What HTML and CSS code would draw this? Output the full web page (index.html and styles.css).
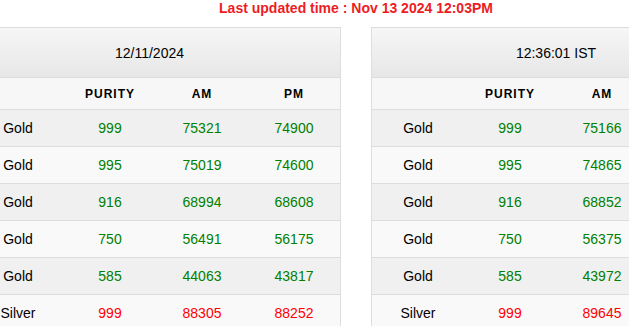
FILE: index.html
```html
<!DOCTYPE html>
<html lang="en">
<head>
<meta charset="utf-8">
<title>Rates</title>
<link rel="stylesheet" href="styles.css">
</head>
<body>
<div class="board">
  <div class="updated">Last updated time : Nov 13 2024 12:03PM</div>
  <div class="panels">
    <div class="panel">
      <div class="head head-date">12/11/2024</div>
      <div class="cols"><span></span><span>PURITY</span><span>AM</span><span>PM</span></div>
      <div class="row odd"><span class="metal">Gold</span><span class="up">999</span><span class="up">75321</span><span class="up">74900</span></div>
      <div class="row even"><span class="metal">Gold</span><span class="up">995</span><span class="up">75019</span><span class="up">74600</span></div>
      <div class="row odd"><span class="metal">Gold</span><span class="up">916</span><span class="up">68994</span><span class="up">68608</span></div>
      <div class="row even"><span class="metal">Gold</span><span class="up">750</span><span class="up">56491</span><span class="up">56175</span></div>
      <div class="row odd"><span class="metal">Gold</span><span class="up">585</span><span class="up">44063</span><span class="up">43817</span></div>
      <div class="row even"><span class="metal">Silver</span><span class="down">999</span><span class="down">88305</span><span class="down">88252</span></div>
    </div>
    <div class="panel">
      <div class="head">12:36:01 IST</div>
      <div class="cols"><span></span><span>PURITY</span><span>AM</span><span>PM</span></div>
      <div class="row odd"><span class="metal">Gold</span><span class="up">999</span><span class="up">75166</span><span class="up"></span></div>
      <div class="row even"><span class="metal">Gold</span><span class="up">995</span><span class="up">74865</span><span class="up"></span></div>
      <div class="row odd"><span class="metal">Gold</span><span class="up">916</span><span class="up">68852</span><span class="up"></span></div>
      <div class="row even"><span class="metal">Gold</span><span class="up">750</span><span class="up">56375</span><span class="up"></span></div>
      <div class="row odd"><span class="metal">Gold</span><span class="up">585</span><span class="up">43972</span><span class="up"></span></div>
      <div class="row even"><span class="metal">Silver</span><span class="down">999</span><span class="down">89645</span><span class="down"></span></div>
    </div>
  </div>
</div>
</body>
</html>
```

FILE: styles.css
```css
html, body {
  margin: 0;
  padding: 0;
  background: #ffffff;
  overflow: hidden;
}
body {
  font-family: "Liberation Sans", Arial, sans-serif;
  color: #000000;
}
.board {
  width: 770px;
  margin-left: -29px;
}
.updated {
  text-align: center;
  font-size: 14px;
  font-weight: bold;
  line-height: 16px;
  color: #ed1c24;
  margin-bottom: 11px;
}
.panels {
  display: flex;
  gap: 30px;
}
.panel {
  width: 370px;
  box-sizing: border-box;
  border: 1px solid #dddddd;
  border-bottom: none;
}
.head {
  height: 49px;
  display: flex;
  align-items: center;
  justify-content: center;
  font-size: 14px;
  background: linear-gradient(to bottom, #f6f6f6, #e7e7e7);
  border-bottom: 1px solid #dddddd;
}
.head-date {
  padding-right: 13px;
}
.cols, .row {
  display: grid;
  grid-template-columns: repeat(4, 92px);
  align-items: center;
  justify-items: center;
  border-bottom: 1px solid #dddddd;
}
.cols {
  height: 31px;
  background: #f7f7f7;
  font-size: 12px;
  font-weight: bold;
  letter-spacing: 1px;
}
.row {
  height: 36px;
  font-size: 14px;
}
.odd { background: #f0f0f0; }
.even { background: #f9f9f9; }
.up { color: #008000; }
.down { color: #ff0000; }
```
